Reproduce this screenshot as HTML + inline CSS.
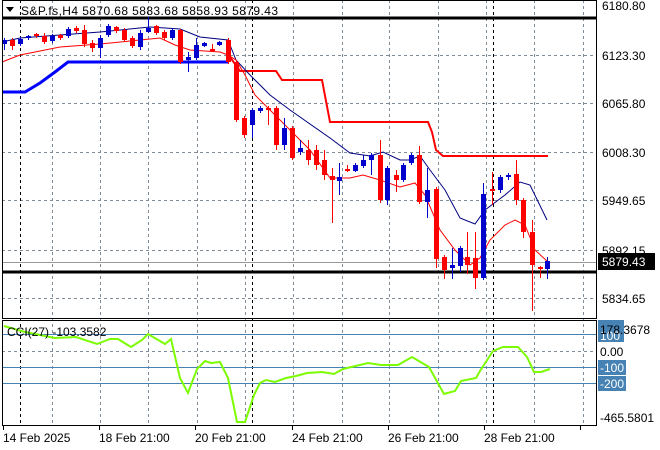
<!DOCTYPE html>
<html><head><style>
body{margin:0;background:#fff;width:660px;height:450px;overflow:hidden}
svg{display:block}
text{font-family:"Liberation Sans",sans-serif;font-size:12px;fill:#000}
</style></head><body>
<svg id="s" width="660" height="450" xmlns="http://www.w3.org/2000/svg">
<g stroke="#7f8c99" stroke-dasharray="3,3" stroke-width="1">
<line x1="2" y1="55.5" x2="596" y2="55.5"/><line x1="2" y1="103.5" x2="596" y2="103.5"/>
<line x1="2" y1="152.5" x2="596" y2="152.5"/><line x1="2" y1="200.5" x2="596" y2="200.5"/>
<line x1="2" y1="250.5" x2="596" y2="250.5"/><line x1="2" y1="298.5" x2="596" y2="298.5"/>
<line x1="2" y1="351.5" x2="596" y2="351.5"/>
<g id="vg"></g>
</g>
<g stroke="#000" stroke-dasharray="3,3"><line x1="20.5" y1="0" x2="20.5" y2="425"/><line x1="252.5" y1="0" x2="252.5" y2="425"/><line x1="493.5" y1="0" x2="493.5" y2="425"/></g>
<line x1="2" y1="262.5" x2="596" y2="262.5" stroke="#999"/>
<g stroke="#4682b4"><line x1="2" y1="334.5" x2="596" y2="334.5"/><line x1="2" y1="367.5" x2="596" y2="367.5"/><line x1="2" y1="383.5" x2="596" y2="383.5"/></g>
<line x1="2" y1="18" x2="596" y2="18" stroke="#000" stroke-width="3"/>
<line x1="2" y1="272" x2="596" y2="272" stroke="#000" stroke-width="3"/>
<polyline fill="none" stroke="#0000ff" stroke-width="3" points="2,92 25,92 40,83 55,72 68,62 228,62"/>
<polyline fill="none" stroke="#ff0000" stroke-width="2" points="230,57 240,71 276,71 282,80 322,80 330,122 428,122 432,132 436,150 443,156 548,156"/>
<polyline fill="none" stroke="#000080" stroke-width="1" points="2,42 20,38 100,32 150,27 180,29 200,37 228,40 236,60 250,75 270,95 290,110 330,138 350,153 370,156 383,152 400,160 410,160 420,156 430,170 445,190 460,218 475,224 485,210 505,195 520,182 530,185 547,220"/>
<polyline fill="none" stroke="#ff0000" stroke-width="1" points="2,62 20,55 60,47 100,44 140,40 160,38 175,45 190,50 220,52 228,55 236,60 245,75 255,95 270,110 290,130 310,150 330,178 350,178 363,175 380,180 400,187 415,183 425,195 440,230 455,250 470,265 480,258 490,240 505,225 515,220 525,225 535,250 548,262"/>
<g id="cd"></g>
<polyline fill="none" stroke="#7cfc00" stroke-width="2" points="4,326 25,332 55,338 76,337 97,344 110,339 118,339 131,347 142,340 148,334 165,344 171,339 180,378 188,393 197,369 205,361 211,363 220,362 228,378 237,422 245,422 254,395 260,383 266,380 275,382 286,378 296,376 307,373 322,372 334,374 343,369 368,363 381,365 398,365 412,357 429,367 444,394 455,391 461,381 476,378 480,371 493,351 503,347 518,347 527,357 534,372 541,372 550,369"/>
<rect x="2.5" y="0.5" width="594" height="318" fill="none" stroke="#000"/>
<rect x="2.5" y="320.5" width="594" height="105" fill="none" stroke="#000"/>
<polygon points="6,7 14,7 10,12" fill="#000"/>
<text x="21" y="15" textLength="257" lengthAdjust="spacing">S&amp;P.fs,H4  5870.68 5883.68 5858.93 5879.43</text>
<text x="7" y="336">CCI(27) -103.3582</text>
<g id="tk" stroke="#000"></g>
<text x="602" y="10">6180.80</text><text x="602" y="60">6123.30</text><text x="602" y="108">6065.80</text>
<text x="602" y="157">6008.30</text><text x="602" y="205">5949.65</text><text x="602" y="255">5892.15</text>
<text x="602" y="303">5834.65</text>
<rect x="598" y="253" width="57" height="17" fill="#000"/><text x="602" y="266" style="fill:#fff">5879.43</text>
<rect x="598" y="320" width="26" height="8" fill="#4682b4"/>
<rect x="598" y="328" width="26" height="14" fill="#4682b4"/><text x="600" y="340" style="fill:#fff">100</text>
<text x="600" y="334">178.3678</text>
<text x="600" y="356">0.00</text>
<rect x="598" y="360" width="28" height="15" fill="#4682b4"/><text x="600" y="372" style="fill:#fff">-100</text>
<rect x="598" y="376" width="28" height="15" fill="#4682b4"/><text x="600" y="388" style="fill:#fff">-200</text>
<text x="600" y="422">-465.5801</text>
<text x="3" y="442">14 Feb 2025</text><text x="99" y="442">18 Feb 21:00</text><text x="195" y="442">20 Feb 21:00</text>
<text x="292" y="442">24 Feb 21:00</text><text x="388" y="442">26 Feb 21:00</text><text x="484" y="442">28 Feb 21:00</text>
</svg>
<script>
var ns="http://www.w3.org/2000/svg";
function el(p,t,a){var e=document.createElementNS(ns,t);for(var k in a)e.setAttribute(k,a[k]);document.getElementById(p).appendChild(e);}
[52,100,148,197,245,293,342,389,438,486,534,583].forEach(function(x){el("vg","line",{x1:x+.5,y1:0,x2:x+.5,y2:425});});
[3,99,195,292,388,484,580].forEach(function(x){el("tk","line",{x1:x+.5,y1:425,x2:x+.5,y2:430});});
var c=[[4,40,44,38,50,0],[12,40,46,38,50,1],[20,39,44,37,46,0],[28,36,38,35,40,0],[36,34,36,33,38,1],[44,36,42,33,44,1],[52,36,41,34,43,0],[60,35,38,34,40,1],[68,29,36,27,38,0],[76,28,31,26,33,1],[84,30,44,25,47,1],[92,43,48,40,52,1],[100,38,48,35,58,0],[108,26,35,24,37,0],[116,27,31,26,33,1],[124,30,40,28,42,1],[132,38,46,36,48,1],[140,33,47,30,50,0],[148,28,32,17,33,0],[156,26,33,25,35,1],[164,32,38,30,40,1],[172,30,38,28,40,0],[180,30,62,29,64,1],[188,57,60,52,72,0],[196,45,58,38,60,0],[204,43,46,42,47,0],[212,49,51,44,52,1],[219,42,45,41,46,0],[228,40,62,38,64,1],[236,62,120,60,122,1],[244,118,135,116,138,1],[252,110,125,108,138,0],[260,108,111,106,113,0],[268,108,110,106,125,1],[276,108,145,106,150,1],[284,128,145,118,150,0],[292,128,158,126,160,1],[300,148,152,140,155,0],[308,150,160,140,165,1],[316,150,165,145,170,1],[324,160,175,150,180,1],[332,176,180,168,223,1],[339,177,181,163,195,0],[347,169,171,165,172,1],[355,165,171,163,172,0],[363,160,166,155,168,0],[371,155,160,153,175,0],[380,155,200,140,203,1],[387,168,200,166,205,0],[396,175,180,170,192,1],[403,165,180,163,182,0],[411,155,163,153,165,0],[419,155,202,146,204,1],[427,190,202,168,218,0],[436,189,259,187,268,1],[444,257,270,255,279,1],[452,265,268,248,279,0],[460,248,266,246,272,0],[467,257,265,232,274,1],[475,258,278,232,289,1],[483,194,278,183,280,0],[492,189,190,172,205,1],[500,177,190,175,193,0],[508,175,177,173,180,0],[516,174,200,160,205,1],[523,200,232,198,238,1],[532,232,265,220,311,1],[540,267,269,266,278,1],[547,261,269,257,279,0]];
c.forEach(function(k){var col=k[5]?"#ff0000":"#0000cd";
el("cd","line",{x1:k[0]+.5,y1:k[3],x2:k[0]+.5,y2:k[4],stroke:col});
el("cd","rect",{x:k[0]-2,y:k[1],width:5,height:Math.max(k[2]-k[1],2),fill:col});});
</script>
</body></html>
